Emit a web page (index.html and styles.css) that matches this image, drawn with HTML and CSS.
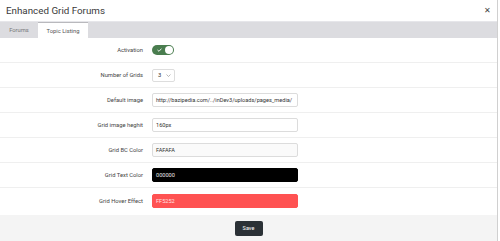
FILE: index.html
```html
<!DOCTYPE html>
<html>
<head>
<meta charset="utf-8">
<link rel="stylesheet" href="styles.css">
</head>
<body>
<div class="modal">
  <div class="header">
    <span class="title">Enhanced Grid Forums</span>
    <span class="close">&#x2715;</span>
  </div>
  <div class="tabs">
    <div class="tab">Forums</div>
    <div class="tab active">Topic Listing</div>
  </div>
  <div class="form">
    <div class="row">
      <div class="label">Activation</div>
      <div class="control">
        <span class="toggle">
          <svg class="check" width="5" height="4" viewBox="0 0 5 4"><path d="M0.5 2 L2 3.3 L4.5 0.6" fill="none" stroke="#fff" stroke-width="0.9"/></svg>
          <span class="knob"></span>
        </span>
      </div>
    </div>
    <div class="row">
      <div class="label">Number of Grids</div>
      <div class="control">
        <span class="select"><span>3</span>
          <svg width="5" height="3" viewBox="0 0 5 3"><path d="M0.5 0.5 L2.5 2.5 L4.5 0.5" fill="none" stroke="#999" stroke-width="0.7"/></svg>
        </span>
      </div>
    </div>
    <div class="row">
      <div class="label">Default image</div>
      <div class="control"><div class="input">http://bazipedia.com/../inDev3/uploads/pages_media/</div></div>
    </div>
    <div class="row">
      <div class="label">Grid image heghit</div>
      <div class="control"><div class="input">160px</div></div>
    </div>
    <div class="row">
      <div class="label">Grid BC Color</div>
      <div class="control"><div class="input bc">FAFAFA</div></div>
    </div>
    <div class="row">
      <div class="label">Grid Text Color</div>
      <div class="control"><div class="input black">000000</div></div>
    </div>
    <div class="row last">
      <div class="label">Grid Hover Effect</div>
      <div class="control"><div class="input red">FF5252</div></div>
    </div>
  </div>
  <div class="footer">
    <button class="save">Save</button>
  </div>
</div>
</body>
</html>
```
FILE: styles.css
```css
* { box-sizing: border-box; }
html, body { margin: 0; padding: 0; background: #fff; }
body { font-family: Roboto, "Liberation Sans", sans-serif; color: #333; width: 500px; height: 241px; overflow: hidden; }
.modal { width: 498px; height: 241px; border-right: 1px solid #d0d0d0; display: flex; flex-direction: column; }
.header { height: 21px; display: flex; align-items: center; justify-content: space-between; padding: 0 6px 0 6px; }
.title { font-size: 9.8px; color: #3a3a3a; }
.close { font-size: 8px; color: #444; }
.tabs { height: 18px; background: #dcdce0; display: flex; align-items: stretch; border-top: 1px solid #e6e6ea; }
.tab { font-size: 5.8px; color: #777; display: flex; align-items: center; justify-content: center; width: 38px; white-space: nowrap; }
.tab.active { background: #fff; color: #555; width: 50px; border-top: 1px solid #b9b9bd; }
.form { flex: 1; display: flex; flex-direction: column; }
.row { height: 25px; border-bottom: 1px solid #efefef; display: grid; grid-template-columns: 143px 1fr; column-gap: 9px; align-items: center; }
.row.last { border-bottom: none; }
.label { text-align: right; font-size: 5.8px; color: #444; white-space: nowrap; }
.control { display: flex; align-items: center; }
.toggle { width: 22px; height: 10px; border-radius: 5px; background: #4a7d4f; position: relative; display: inline-block; }
.check { position: absolute; left: 5px; top: 3px; }
.knob { position: absolute; right: 1px; top: 1px; width: 8px; height: 8px; border-radius: 50%; background: #fff; }
.select { width: 23px; height: 13px; border: 1px solid #ddd; border-radius: 2px; display: flex; align-items: center; justify-content: space-between; padding: 0 3px 0 5px; font-size: 5.8px; color: #333; }
.input { width: 146px; height: 14px; border: 1px solid #dcdcdc; border-radius: 2px; font-size: 5.6px; color: #333; display: flex; align-items: center; padding: 0 3px; white-space: nowrap; overflow: hidden; }
.input.bc { background: #fafafa; }
.input.black { background: #000; border-color: #000; color: #e8e8e8; }
.input.red { background: #ff5252; border-color: #ff5252; color: #ffe0e0; }
.footer { height: 26px; background: #f4f4f4; display: flex; justify-content: center; align-items: center; margin-top: 2px; }
.save { width: 28px; height: 15px; background: #2b3136; color: #fff; border: none; border-radius: 2px; font-family: Roboto, "Liberation Sans", sans-serif; font-size: 5.5px; padding: 0; }
```
